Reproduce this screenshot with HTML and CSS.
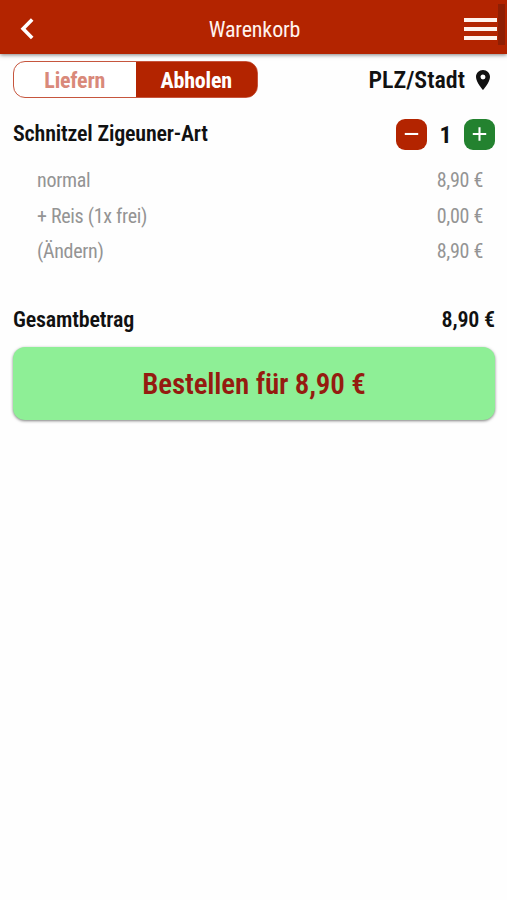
FILE: index.html
```
<!DOCTYPE html>
<html lang="de">
  <head>
    <meta charset="UTF-8" />
    <title>Warenkorb</title>
    <link rel="stylesheet" href="styles.css">
  </head>
  <body>
    <header class="topbar">
      <svg class="back-icon" viewBox="0 0 14 22">
        <path d="M12.2 1.5 3.1 10.7l9.1 9.2" />
      </svg>
      <h1>Warenkorb</h1>
      <div class="menu-icon">
        <span></span>
        <span></span>
        <span></span>
      </div>
      <div class="scrollbar"></div>
    </header>

    <main class="cart">
      <div class="options">
        <div class="toggle">
          <div class="toggle-item">Liefern</div>
          <div class="toggle-item active">Abholen</div>
        </div>
        <div class="location">
          <span>PLZ/Stadt</span>
          <svg class="pin-icon" viewBox="5 2 14 20">
            <path d="M12 2C8.13 2 5 5.13 5 9c0 5.25 7 13 7 13s7-7.75 7-13c0-3.87-3.13-7-7-7zm0 9.5a2.5 2.5 0 0 1 0-5 2.5 2.5 0 0 1 0 5z" />
          </svg>
        </div>
      </div>

      <div class="item">
        <div class="item-name">Schnitzel Zigeuner-Art</div>
        <div class="quantity">
          <div class="qty-btn minus">
            <svg viewBox="0 0 30 30"><path d="M8.5 14.5h13" /></svg>
          </div>
          <span class="qty">1</span>
          <div class="qty-btn plus">
            <svg viewBox="0 0 30 30"><path d="M8.5 14.5h13M15 8v13" /></svg>
          </div>
        </div>
      </div>

      <div class="details">
        <div class="detail-row"><span>normal</span><span>8,90 €</span></div>
        <div class="detail-row"><span>+ Reis (1x frei)</span><span>0,00 €</span></div>
        <div class="detail-row"><span>(Ändern)</span><span>8,90 €</span></div>
      </div>

      <div class="total">
        <span>Gesamtbetrag</span>
        <span>8,90 €</span>
      </div>

      <button class="order-btn">Bestellen für 8,90 €</button>
    </main>
  </body>
</html>
```
FILE: styles.css
```
* {
  margin: 0;
  padding: 0;
  box-sizing: border-box;
}

body {
  font-family: "Roboto Condensed", Roboto, sans-serif;
  font-stretch: 75%;
  background: #fefefe;
  color: #111;
  min-height: 900px;
}

.topbar {
  position: relative;
  display: flex;
  align-items: center;
  justify-content: space-between;
  height: 54px;
  padding: 3px 10px 0 20px;
  background: #b32400;
  color: #fff3ee;
  box-shadow: 0 1px 4px rgba(0, 0, 0, 0.5);
}

.topbar h1 {
  padding-top: 2px;
  font-size: 22px;
  font-weight: 450;
  line-height: 26px;
  letter-spacing: -0.15px;
}

.back-icon {
  width: 14px;
  height: 22px;
  margin-right: 11px;
  fill: none;
  stroke: #fff;
  stroke-width: 3.6;
}

.menu-icon {
  display: flex;
  flex-direction: column;
  gap: 5px;
  width: 33px;
}

.menu-icon span {
  height: 4px;
  background: #fff3ee;
}

.scrollbar {
  position: absolute;
  top: 4px;
  right: 2px;
  width: 7px;
  height: 41px;
  background: #8f1f04;
}

.cart {
  padding: 7px 12px 0 13px;
}

.options {
  display: flex;
  align-items: center;
  justify-content: space-between;
  height: 37px;
}

.toggle {
  display: flex;
  width: 245px;
  height: 37px;
  border: 1px solid #c6553d;
  border-radius: 12px;
  background: linear-gradient(90deg, #fff 50%, #b32400 50%);
  overflow: hidden;
}

.toggle-item {
  flex: 1;
  font-size: 22px;
  font-weight: 700;
  line-height: 37px;
  letter-spacing: -0.2px;
  text-align: center;
  color: #d9897a;
}

.toggle-item.active {
  background: #b32400;
  color: #fff;
}

.location {
  display: flex;
  align-items: center;
  gap: 11px;
  padding-right: 5px;
  font-size: 24px;
  font-weight: 600;
}

.pin-icon {
  width: 14px;
  height: 20px;
  fill: #111;
}

.item {
  display: flex;
  align-items: center;
  justify-content: space-between;
  height: 30px;
  margin-top: 21px;
}

.item-name {
  padding-bottom: 2px;
  font-size: 22px;
  font-weight: 600;
  letter-spacing: -0.18px;
}

.quantity {
  display: flex;
  align-items: center;
}

.qty-btn {
  width: 31px;
  height: 31px;
  border-radius: 9px;
}

.qty-btn svg {
  display: block;
  stroke: #fff;
  stroke-width: 2;
}

.minus {
  background: #b32400;
}

.plus {
  background: #23822f;
}

.qty {
  width: 37px;
  padding-top: 1px;
  font-size: 24px;
  font-weight: 700;
  text-align: center;
}

.details {
  padding: 14px 12px 0 24px;
  font-size: 20px;
  letter-spacing: -0.3px;
  color: #949494;
}

.detail-row {
  display: flex;
  justify-content: space-between;
  line-height: 35.5px;
}

.total {
  display: flex;
  justify-content: space-between;
  margin-top: 37px;
  font-size: 22px;
  font-weight: 600;
  line-height: 26px;
  letter-spacing: -0.18px;
}

.order-btn {
  display: block;
  width: 100%;
  height: 73px;
  margin-top: 14px;
  padding-top: 2px;
  border: none;
  border-radius: 12px;
  background: #8eef96;
  color: #951b10;
  font: inherit;
  font-size: 29px;
  font-weight: 600;
  letter-spacing: -0.15px;
  box-shadow: 0 1px 3px rgba(0, 0, 0, 0.5);
}
```
